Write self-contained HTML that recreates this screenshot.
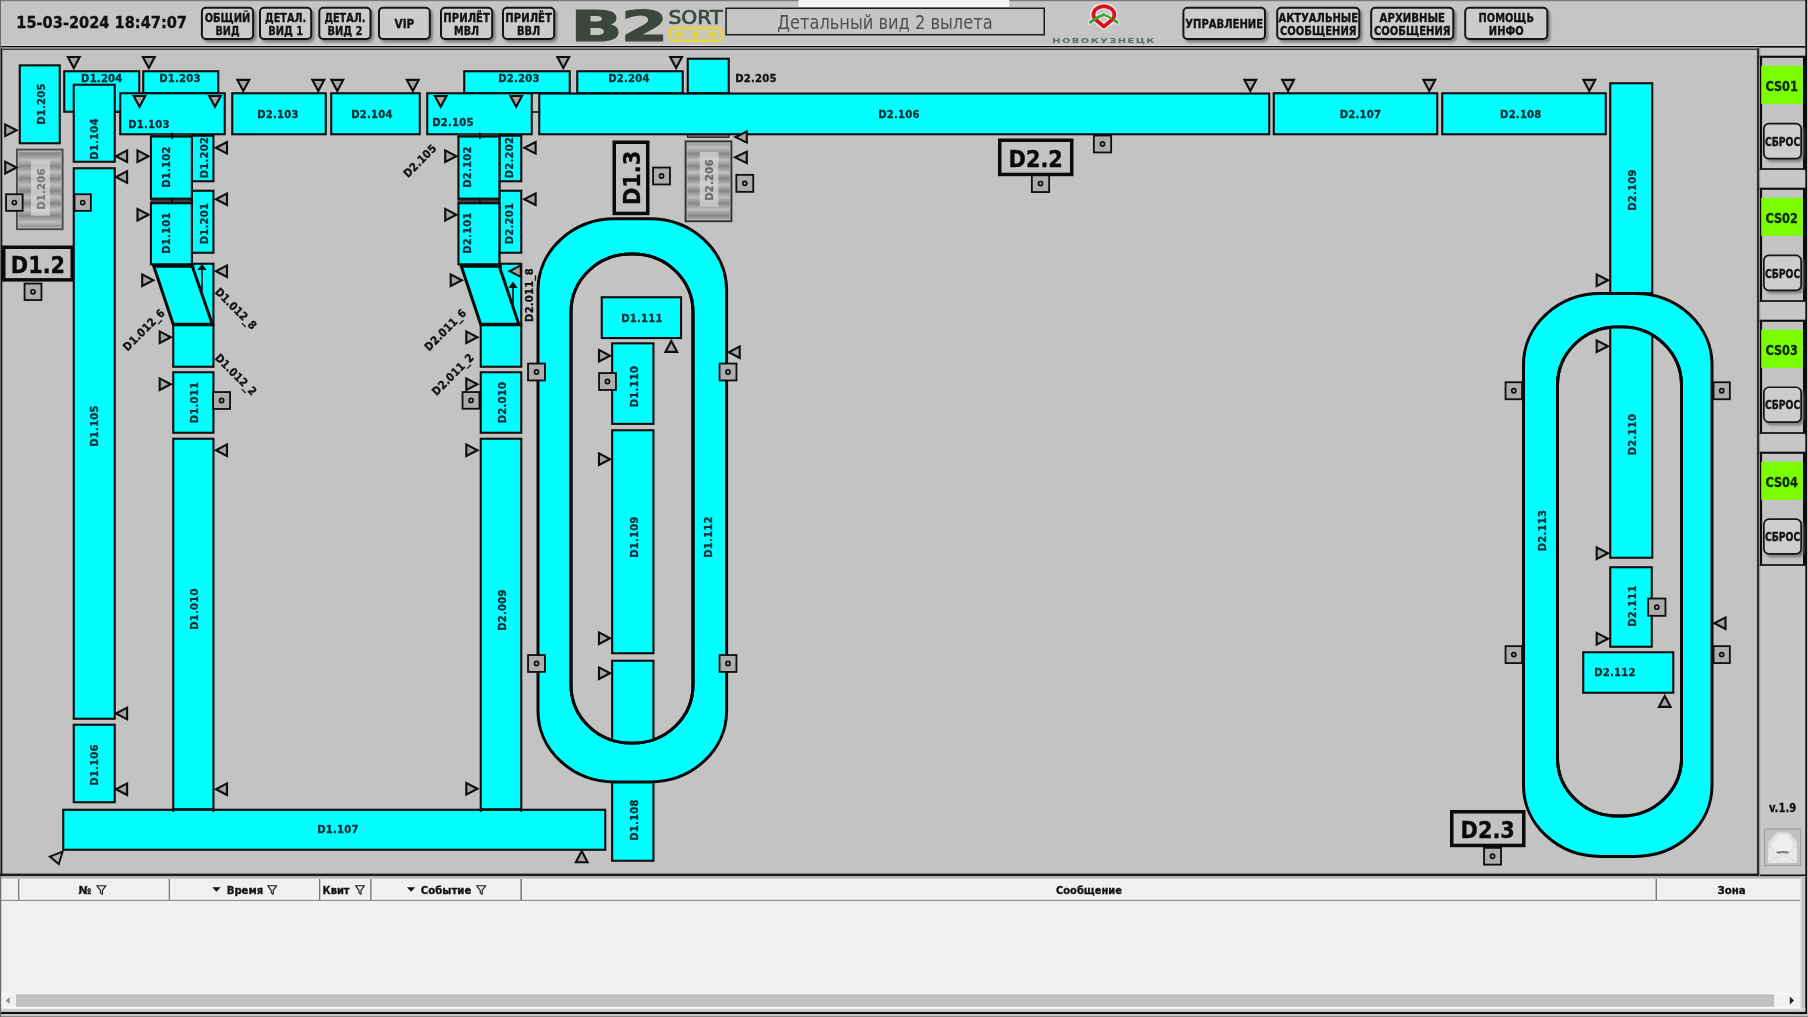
<!DOCTYPE html>
<html lang="ru"><head><meta charset="utf-8"><title>Детальный вид 2 вылета</title>
<style>
html,body{margin:0;padding:0;background:#c6c6c6;overflow:hidden}
body{width:1808px;height:1017px;position:relative;font-family:"DejaVu Sans Condensed","DejaVu Sans","Liberation Sans",sans-serif}
svg{position:absolute;left:0;top:0;display:block;will-change:transform;opacity:0.9999}
text{white-space:pre}
</style></head><body>
<svg width="1808" height="1017" viewBox="0 0 1808 1017">
<rect x="0" y="0" width="1808" height="1017" fill="#c5c5c5"/>
<rect x="0" y="0" width="1808" height="1.2" fill="#7a7a7a"/>
<rect x="798.6" y="0" width="210.6" height="7" fill="#f6f6f6"/>
<rect x="0" y="47" width="1759" height="829" fill="#c3c3c3"/>
<rect x="0" y="44.7" width="1805.3" height="1.2" fill="#d6d6d6"/>
<rect x="0" y="46" width="1805.3" height="1.6" fill="#050505"/>
<rect x="0" y="47.6" width="1759" height="1.0" fill="#e4e4e4"/>
<rect x="0" y="48.6" width="1759" height="1.1" fill="#080808"/>
<rect x="0" y="0" width="1" height="877" fill="#6a6a6a"/>
<rect x="1" y="48.5" width="1.3" height="827" fill="#101010"/>
<rect x="1756.9" y="48.5" width="2.1" height="828" fill="#2e2e2e"/>
<rect x="0" y="873.6" width="1759" height="2.8" fill="#1c1c1c"/>
<rect x="1759" y="48" width="49" height="829" fill="#c7c7c7"/>
<rect x="1759" y="47.4" width="46.3" height="0.6" fill="#555"/>
<rect x="1805.3" y="0" width="1.8" height="877" fill="#111"/>
<rect x="1759" y="874.5" width="49" height="2" fill="#111"/>
<rect x="1759" y="48" width="1.2" height="828" fill="#9a9a9a"/>
<rect x="19.75" y="65.35" width="40.00" height="77.90" fill="#00ffff" stroke="#0e0e0e" stroke-width="2.1" />
<rect x="64.25" y="71.25" width="75.00" height="40.50" fill="#00ffff" stroke="#0e0e0e" stroke-width="2.1" />
<rect x="73.75" y="84.75" width="41.00" height="77.00" fill="#00ffff" stroke="#0e0e0e" stroke-width="2.1" />
<rect x="120.25" y="93.25" width="104.50" height="41.00" fill="#00ffff" stroke="#0e0e0e" stroke-width="2.1" />
<rect x="143.25" y="71.25" width="75.00" height="21.80" fill="#00ffff" stroke="#0e0e0e" stroke-width="2.1" />
<rect x="232.25" y="93.25" width="93.50" height="41.00" fill="#00ffff" stroke="#0e0e0e" stroke-width="2.1" />
<rect x="331.25" y="93.25" width="88.50" height="41.00" fill="#00ffff" stroke="#0e0e0e" stroke-width="2.1" />
<rect x="73.75" y="168.25" width="41.00" height="550.50" fill="#00ffff" stroke="#0e0e0e" stroke-width="2.1" />
<rect x="73.75" y="724.75" width="41.00" height="77.50" fill="#00ffff" stroke="#0e0e0e" stroke-width="2.1" />
<rect x="150.5" y="133.4" width="42" height="4.2" fill="#3a3226"/>
<rect x="150.5" y="198.4" width="42" height="5.2" fill="#3a3a3a"/>
<rect x="191.95" y="135.75" width="21.50" height="45.50" fill="#00ffff" stroke="#0e0e0e" stroke-width="2.1" />
<rect x="191.95" y="190.75" width="21.50" height="62.00" fill="#00ffff" stroke="#0e0e0e" stroke-width="2.1" />
<rect x="150.95" y="136.55" width="40.90" height="62.10" fill="#00ffff" stroke="#0e0e0e" stroke-width="2.1" />
<rect x="150.95" y="203.25" width="40.90" height="61.00" fill="#00ffff" stroke="#0e0e0e" stroke-width="2.1" />
<rect x="171.4" y="132.6" width="1.7" height="6.6" fill="#111"/>
<rect x="171.4" y="197.6" width="1.7" height="6.6" fill="#111"/>
<rect x="191.2" y="181" width="1.7" height="10" fill="#111"/>
<rect x="191.2" y="252" width="1.7" height="12" fill="#111"/>
<rect x="193.25" y="263.75" width="20.20" height="61.00" fill="#00ffff" stroke="#0e0e0e" stroke-width="2.1" />
<rect x="173.25" y="325.25" width="40.20" height="41.50" fill="#00ffff" stroke="#0e0e0e" stroke-width="2.1" />
<polygon points="153.8,266.2 192.3,266.2 212.3,324.3 173.2,324.3" fill="#00ffff" stroke="#0c0c0c" stroke-width="3" stroke-linejoin="miter"/>
<path d="M202 291 V266.5" stroke="#111" stroke-width="1.6" fill="none"/><polygon points="202,263.8 197.3,270 206.7,270" fill="#111"/>
<rect x="173.25" y="372.25" width="40.20" height="60.50" fill="#00ffff" stroke="#0e0e0e" stroke-width="2.1" />
<rect x="173.25" y="438.75" width="40.20" height="370.50" fill="#00ffff" stroke="#0e0e0e" stroke-width="2.1" />
<rect x="63.25" y="809.75" width="542.00" height="40.00" fill="#00ffff" stroke="#0e0e0e" stroke-width="2.1" />
<rect x="172.5" y="808" width="1.6" height="4" fill="#111"/><rect x="212.6" y="808" width="1.6" height="4" fill="#111"/>
<rect x="427.25" y="93.25" width="104.50" height="41.00" fill="#00ffff" stroke="#0e0e0e" stroke-width="2.1" />
<rect x="464.25" y="71.25" width="105.50" height="21.80" fill="#00ffff" stroke="#0e0e0e" stroke-width="2.1" />
<rect x="539.25" y="93.55" width="730.00" height="40.70" fill="#00ffff" stroke="#0e0e0e" stroke-width="2.1" />
<rect x="577.25" y="71.25" width="105.50" height="21.80" fill="#00ffff" stroke="#0e0e0e" stroke-width="2.1" />
<rect x="687.75" y="58.75" width="41.00" height="34.30" fill="#00ffff" stroke="#0e0e0e" stroke-width="2.1" />
<rect x="532" y="111.2" width="7" height="1.6" fill="#111"/>
<rect x="115" y="111.2" width="5" height="1.6" fill="#111"/>
<rect x="1273.75" y="93.25" width="163.50" height="41.00" fill="#00ffff" stroke="#0e0e0e" stroke-width="2.1" />
<rect x="1442.25" y="93.25" width="163.50" height="41.00" fill="#00ffff" stroke="#0e0e0e" stroke-width="2.1" />
<rect x="1610.25" y="83.25" width="42.00" height="210.00" fill="#00ffff" stroke="#0e0e0e" stroke-width="2.1" />
<rect x="457.5" y="133.4" width="42" height="4.2" fill="#3a3226"/>
<rect x="457.5" y="198.4" width="42" height="5.2" fill="#3a3a3a"/>
<rect x="499.45" y="135.75" width="21.80" height="45.50" fill="#00ffff" stroke="#0e0e0e" stroke-width="2.1" />
<rect x="499.45" y="190.75" width="21.80" height="62.00" fill="#00ffff" stroke="#0e0e0e" stroke-width="2.1" />
<rect x="458.45" y="136.55" width="41.00" height="62.10" fill="#00ffff" stroke="#0e0e0e" stroke-width="2.1" />
<rect x="458.45" y="203.25" width="41.00" height="61.00" fill="#00ffff" stroke="#0e0e0e" stroke-width="2.1" />
<rect x="479" y="132.6" width="1.7" height="6.6" fill="#111"/>
<rect x="479" y="197.6" width="1.7" height="6.6" fill="#111"/>
<rect x="498.7" y="181" width="1.7" height="10" fill="#111"/>
<rect x="498.7" y="252" width="1.7" height="12" fill="#111"/>
<rect x="500.75" y="263.75" width="20.50" height="61.00" fill="#00ffff" stroke="#0e0e0e" stroke-width="2.1" />
<rect x="480.75" y="325.25" width="40.50" height="41.50" fill="#00ffff" stroke="#0e0e0e" stroke-width="2.1" />
<polygon points="461.3,266.2 499.3,266.2 518.8,324.3 480.7,324.3" fill="#00ffff" stroke="#0c0c0c" stroke-width="3" stroke-linejoin="miter"/>
<path d="M513 305 V284" stroke="#111" stroke-width="1.6" fill="none"/><polygon points="513,281.5 508.3,288 517.7,288" fill="#111"/>
<rect x="480.75" y="372.25" width="40.50" height="60.50" fill="#00ffff" stroke="#0e0e0e" stroke-width="2.1" />
<rect x="480.75" y="438.75" width="40.50" height="370.50" fill="#00ffff" stroke="#0e0e0e" stroke-width="2.1" />
<rect x="62.5" y="809" width="543.5" height="1.6" fill="#141414"/>
<rect x="480" y="808" width="1.6" height="4" fill="#111"/><rect x="520.4" y="808" width="1.6" height="4" fill="#111"/>
<rect x="687.60" y="134.80" width="41.30" height="2.40" fill="#8c8c8c" stroke="#0e0e0e" stroke-width="1.2" />
<defs><linearGradient id="stripe" gradientUnits="userSpaceOnUse" x1="0" y1="153.8" x2="0" y2="160" spreadMethod="reflect"><stop offset="0" stop-color="#868686"/><stop offset="1" stop-color="#bebebe"/></linearGradient></defs>
<rect x="16.95" y="149.55" width="45.7" height="79.69999999999999" fill="#b4b4b4" stroke="#484848" stroke-width="1.8"/>
<rect x="18.8" y="151.8" width="42.0" height="75.19999999999999" fill="url(#stripe)"/>
<rect x="31" y="160.6" width="19" height="55.099999999999994" fill="#d8dad8" fill-opacity="0.72"/>
<rect x="685.55" y="141.35" width="45.90000000000009" height="79.9" fill="#b4b4b4" stroke="#2e2e2e" stroke-width="1.8"/>
<rect x="687.4" y="143.6" width="42.20000000000009" height="75.4" fill="url(#stripe)"/>
<rect x="699.8" y="151.8" width="18.600000000000023" height="54.79999999999998" fill="#d8dad8" fill-opacity="0.72"/>
<rect x="612.15" y="781.75" width="41.30" height="79.00" fill="#00ffff" stroke="#0e0e0e" stroke-width="2.1" />
<rect x="538" y="218.8" width="188.60" height="563.20" rx="77" ry="71" fill="#00ffff" stroke="#080808" stroke-width="3"/>
<rect x="571" y="254" width="122.00" height="489.00" rx="59.5" ry="58" fill="#c3c3c3" stroke="#080808" stroke-width="3"/>
<rect x="601.75" y="297.25" width="79.30" height="40.80" fill="#00ffff" stroke="#0e0e0e" stroke-width="2.1" />
<rect x="612.15" y="343.35" width="41.30" height="80.50" fill="#00ffff" stroke="#0e0e0e" stroke-width="2.1" />
<rect x="612.15" y="430.25" width="41.30" height="223.00" fill="#00ffff" stroke="#0e0e0e" stroke-width="2.1" />
<clipPath id="cl1"><rect x="571" y="254" width="122" height="489" rx="59.5" ry="58"/></clipPath>
<rect x="612.15" y="660.75" width="41.30" height="88.50" fill="#00ffff" stroke="#0e0e0e" stroke-width="2.1" clip-path="url(#cl1)"/>
<rect x="571" y="254" width="122.00" height="489.00" rx="59.5" ry="58" fill="none" stroke="#080808" stroke-width="3"/>
<rect x="1523.5" y="293.5" width="188.50" height="563.00" rx="77" ry="71" fill="#00ffff" stroke="#080808" stroke-width="3"/>
<rect x="1557.5" y="327" width="124.00" height="489.00" rx="59.5" ry="58" fill="#c3c3c3" stroke="#080808" stroke-width="3"/>
<clipPath id="cl2"><rect x="1557.5" y="327" width="124" height="489" rx="59.5" ry="58"/></clipPath>
<rect x="1610.25" y="322.75" width="42.00" height="235.00" fill="#00ffff" stroke="#0e0e0e" stroke-width="2.1" clip-path="url(#cl2)"/>
<rect x="1610.25" y="567.25" width="41.50" height="79.50" fill="#00ffff" stroke="#0e0e0e" stroke-width="2.1" />
<rect x="1583.25" y="652.25" width="90.00" height="40.50" fill="#00ffff" stroke="#0e0e0e" stroke-width="2.1" />
<rect x="1557.5" y="327" width="124.00" height="489.00" rx="59.5" ry="58" fill="none" stroke="#080808" stroke-width="3"/>
<polygon points="67.90,57.00 79.70,57.00 73.80,68.11" fill="#a4a4a4" stroke="#0e0e0e" stroke-width="2.1" stroke-linejoin="miter"/>
<polygon points="142.90,57.00 154.70,57.00 148.80,68.11" fill="#a4a4a4" stroke="#0e0e0e" stroke-width="2.1" stroke-linejoin="miter"/>
<polygon points="557.40,57.00 569.20,57.00 563.30,68.11" fill="#a4a4a4" stroke="#0e0e0e" stroke-width="2.1" stroke-linejoin="miter"/>
<polygon points="670.20,57.00 682.00,57.00 676.10,68.11" fill="#a4a4a4" stroke="#0e0e0e" stroke-width="2.1" stroke-linejoin="miter"/>
<polygon points="237.39,79.90 249.21,79.90 243.30,91.10" fill="#a4a4a4" stroke="#0e0e0e" stroke-width="2.1" stroke-linejoin="miter"/>
<polygon points="312.39,79.90 324.21,79.90 318.30,91.10" fill="#a4a4a4" stroke="#0e0e0e" stroke-width="2.1" stroke-linejoin="miter"/>
<polygon points="331.39,79.90 343.21,79.90 337.30,91.10" fill="#a4a4a4" stroke="#0e0e0e" stroke-width="2.1" stroke-linejoin="miter"/>
<polygon points="406.89,79.90 418.71,79.90 412.80,91.10" fill="#a4a4a4" stroke="#0e0e0e" stroke-width="2.1" stroke-linejoin="miter"/>
<polygon points="1244.39,79.90 1256.21,79.90 1250.30,91.10" fill="#a4a4a4" stroke="#0e0e0e" stroke-width="2.1" stroke-linejoin="miter"/>
<polygon points="1282.19,79.90 1294.01,79.90 1288.10,91.10" fill="#a4a4a4" stroke="#0e0e0e" stroke-width="2.1" stroke-linejoin="miter"/>
<polygon points="1423.39,79.90 1435.21,79.90 1429.30,91.10" fill="#a4a4a4" stroke="#0e0e0e" stroke-width="2.1" stroke-linejoin="miter"/>
<polygon points="1583.39,79.90 1595.21,79.90 1589.30,91.10" fill="#a4a4a4" stroke="#0e0e0e" stroke-width="2.1" stroke-linejoin="miter"/>
<polygon points="133.71,96.00 145.29,96.00 139.50,106.74" fill="#a4a4a4" stroke="#0e0e0e" stroke-width="2.1" stroke-linejoin="miter"/>
<polygon points="209.21,96.00 220.79,96.00 215.00,106.74" fill="#a4a4a4" stroke="#0e0e0e" stroke-width="2.1" stroke-linejoin="miter"/>
<polygon points="434.91,96.00 446.49,96.00 440.70,106.74" fill="#a4a4a4" stroke="#0e0e0e" stroke-width="2.1" stroke-linejoin="miter"/>
<polygon points="510.41,96.00 521.99,96.00 516.20,106.74" fill="#a4a4a4" stroke="#0e0e0e" stroke-width="2.1" stroke-linejoin="miter"/>
<polygon points="5.20,124.37 5.20,136.13 16.56,130.25" fill="#a4a4a4" stroke="#0e0e0e" stroke-width="2.1" stroke-linejoin="miter"/>
<polygon points="5.20,161.67 5.20,173.43 16.56,167.55" fill="#a4a4a4" stroke="#0e0e0e" stroke-width="2.1" stroke-linejoin="miter"/>
<polygon points="127.10,150.38 127.10,162.02 115.92,156.20" fill="#a4a4a4" stroke="#0e0e0e" stroke-width="2.1" stroke-linejoin="miter"/>
<polygon points="127.10,171.18 127.10,182.82 115.92,177.00" fill="#a4a4a4" stroke="#0e0e0e" stroke-width="2.1" stroke-linejoin="miter"/>
<polygon points="137.50,150.38 137.50,162.02 148.68,156.20" fill="#a4a4a4" stroke="#0e0e0e" stroke-width="2.1" stroke-linejoin="miter"/>
<polygon points="137.50,208.88 137.50,220.52 148.68,214.70" fill="#a4a4a4" stroke="#0e0e0e" stroke-width="2.1" stroke-linejoin="miter"/>
<polygon points="227.00,141.99 227.00,153.61 215.91,147.80" fill="#a4a4a4" stroke="#0e0e0e" stroke-width="2.1" stroke-linejoin="miter"/>
<polygon points="227.00,193.39 227.00,205.01 215.91,199.20" fill="#a4a4a4" stroke="#0e0e0e" stroke-width="2.1" stroke-linejoin="miter"/>
<polygon points="227.00,265.39 227.00,277.01 215.91,271.20" fill="#a4a4a4" stroke="#0e0e0e" stroke-width="2.1" stroke-linejoin="miter"/>
<polygon points="142.20,274.38 142.20,286.02 153.38,280.20" fill="#a4a4a4" stroke="#0e0e0e" stroke-width="2.1" stroke-linejoin="miter"/>
<polygon points="159.70,331.39 159.70,343.01 170.79,337.20" fill="#a4a4a4" stroke="#0e0e0e" stroke-width="2.1" stroke-linejoin="miter"/>
<polygon points="159.70,378.39 159.70,390.01 170.79,384.20" fill="#a4a4a4" stroke="#0e0e0e" stroke-width="2.1" stroke-linejoin="miter"/>
<polygon points="227.00,444.39 227.00,456.01 215.91,450.20" fill="#a4a4a4" stroke="#0e0e0e" stroke-width="2.1" stroke-linejoin="miter"/>
<polygon points="127.10,707.68 127.10,719.32 115.92,713.50" fill="#a4a4a4" stroke="#0e0e0e" stroke-width="2.1" stroke-linejoin="miter"/>
<polygon points="127.10,783.38 127.10,795.02 115.92,789.20" fill="#a4a4a4" stroke="#0e0e0e" stroke-width="2.1" stroke-linejoin="miter"/>
<polygon points="227.00,783.39 227.00,795.01 215.91,789.20" fill="#a4a4a4" stroke="#0e0e0e" stroke-width="2.1" stroke-linejoin="miter"/>
<polygon points="445.20,150.38 445.20,162.02 456.38,156.20" fill="#a4a4a4" stroke="#0e0e0e" stroke-width="2.1" stroke-linejoin="miter"/>
<polygon points="445.20,208.88 445.20,220.52 456.38,214.70" fill="#a4a4a4" stroke="#0e0e0e" stroke-width="2.1" stroke-linejoin="miter"/>
<polygon points="535.60,141.97 535.60,153.63 524.25,147.80" fill="#a4a4a4" stroke="#0e0e0e" stroke-width="2.1" stroke-linejoin="miter"/>
<polygon points="535.60,193.37 535.60,205.03 524.25,199.20" fill="#a4a4a4" stroke="#0e0e0e" stroke-width="2.1" stroke-linejoin="miter"/>
<polygon points="520.80,265.38 520.80,276.82 509.74,271.10" fill="#a4a4a4" stroke="#0e0e0e" stroke-width="2.1" stroke-linejoin="miter"/>
<polygon points="450.70,274.38 450.70,286.02 461.88,280.20" fill="#a4a4a4" stroke="#0e0e0e" stroke-width="2.1" stroke-linejoin="miter"/>
<polygon points="466.30,331.38 466.30,343.02 477.48,337.20" fill="#a4a4a4" stroke="#0e0e0e" stroke-width="2.1" stroke-linejoin="miter"/>
<polygon points="466.30,378.38 466.30,390.02 477.48,384.20" fill="#a4a4a4" stroke="#0e0e0e" stroke-width="2.1" stroke-linejoin="miter"/>
<polygon points="466.30,444.38 466.30,456.02 477.48,450.20" fill="#a4a4a4" stroke="#0e0e0e" stroke-width="2.1" stroke-linejoin="miter"/>
<polygon points="466.30,782.98 466.30,794.62 477.48,788.80" fill="#a4a4a4" stroke="#0e0e0e" stroke-width="2.1" stroke-linejoin="miter"/>
<polygon points="746.80,131.54 746.80,142.66 735.52,137.10" fill="#a4a4a4" stroke="#0e0e0e" stroke-width="2.1" stroke-linejoin="miter"/>
<polygon points="746.80,151.63 746.80,163.07 735.05,157.35" fill="#a4a4a4" stroke="#0e0e0e" stroke-width="2.1" stroke-linejoin="miter"/>
<polygon points="599.00,349.89 599.00,361.51 610.09,355.70" fill="#a4a4a4" stroke="#0e0e0e" stroke-width="2.1" stroke-linejoin="miter"/>
<polygon points="599.00,453.39 599.00,465.01 610.09,459.20" fill="#a4a4a4" stroke="#0e0e0e" stroke-width="2.1" stroke-linejoin="miter"/>
<polygon points="599.00,632.39 599.00,644.01 610.09,638.20" fill="#a4a4a4" stroke="#0e0e0e" stroke-width="2.1" stroke-linejoin="miter"/>
<polygon points="599.00,667.39 599.00,679.01 610.09,673.20" fill="#a4a4a4" stroke="#0e0e0e" stroke-width="2.1" stroke-linejoin="miter"/>
<polygon points="665.40,351.90 677.20,351.90 671.30,340.88" fill="#a4a4a4" stroke="#0e0e0e" stroke-width="2.1" stroke-linejoin="miter"/>
<polygon points="739.70,346.40 739.70,358.00 728.87,352.20" fill="#a4a4a4" stroke="#0e0e0e" stroke-width="2.1" stroke-linejoin="miter"/>
<polygon points="575.89,862.30 587.61,862.30 581.75,851.11" fill="#a4a4a4" stroke="#0e0e0e" stroke-width="2.1" stroke-linejoin="miter"/>
<polygon points="1596.70,274.37 1596.70,286.03 1608.05,280.20" fill="#a4a4a4" stroke="#0e0e0e" stroke-width="2.1" stroke-linejoin="miter"/>
<polygon points="1596.70,340.37 1596.70,352.03 1608.05,346.20" fill="#a4a4a4" stroke="#0e0e0e" stroke-width="2.1" stroke-linejoin="miter"/>
<polygon points="1596.70,547.37 1596.70,559.03 1608.05,553.20" fill="#a4a4a4" stroke="#0e0e0e" stroke-width="2.1" stroke-linejoin="miter"/>
<polygon points="1596.70,632.87 1596.70,644.53 1608.05,638.70" fill="#a4a4a4" stroke="#0e0e0e" stroke-width="2.1" stroke-linejoin="miter"/>
<polygon points="1725.50,617.39 1725.50,629.01 1714.41,623.20" fill="#a4a4a4" stroke="#0e0e0e" stroke-width="2.1" stroke-linejoin="miter"/>
<polygon points="1658.90,706.90 1670.60,706.90 1664.75,695.89" fill="#a4a4a4" stroke="#0e0e0e" stroke-width="2.1" stroke-linejoin="miter"/>
<polygon points="49.8,856.6 62.6,851.6 58.8,864" fill="#b0b0b0" stroke="#0e0e0e" stroke-width="1.9" stroke-linejoin="miter"/>
<rect x="6.05" y="194.25" width="16.60" height="16.60" fill="#adadad" stroke="#0e0e0e" stroke-width="1.8" />
<circle cx="14.35" cy="202.55" r="2.05" fill="#adadad" stroke="#0e0e0e" stroke-width="1.7"/>
<rect x="74.55" y="194.25" width="16.30" height="16.60" fill="#adadad" stroke="#0e0e0e" stroke-width="1.8" />
<circle cx="82.70" cy="202.55" r="2.05" fill="#adadad" stroke="#0e0e0e" stroke-width="1.7"/>
<rect x="24.55" y="283.55" width="16.90" height="16.50" fill="#adadad" stroke="#0e0e0e" stroke-width="1.8" />
<circle cx="33.00" cy="291.80" r="2.05" fill="#adadad" stroke="#0e0e0e" stroke-width="1.7"/>
<rect x="213.15" y="392.05" width="16.90" height="16.90" fill="#adadad" stroke="#0e0e0e" stroke-width="1.8" />
<circle cx="221.60" cy="400.50" r="2.05" fill="#adadad" stroke="#0e0e0e" stroke-width="1.7"/>
<rect x="462.55" y="392.05" width="16.90" height="16.70" fill="#adadad" stroke="#0e0e0e" stroke-width="1.8" />
<circle cx="471.00" cy="400.40" r="2.05" fill="#adadad" stroke="#0e0e0e" stroke-width="1.7"/>
<rect x="528.05" y="363.55" width="16.90" height="16.90" fill="#adadad" stroke="#0e0e0e" stroke-width="1.8" />
<circle cx="536.50" cy="372.00" r="2.05" fill="#adadad" stroke="#0e0e0e" stroke-width="1.7"/>
<rect x="599.05" y="373.05" width="16.90" height="16.90" fill="#adadad" stroke="#0e0e0e" stroke-width="1.8" />
<circle cx="607.50" cy="381.50" r="2.05" fill="#adadad" stroke="#0e0e0e" stroke-width="1.7"/>
<rect x="719.55" y="363.55" width="16.90" height="16.90" fill="#adadad" stroke="#0e0e0e" stroke-width="1.8" />
<circle cx="728.00" cy="372.00" r="2.05" fill="#adadad" stroke="#0e0e0e" stroke-width="1.7"/>
<rect x="528.05" y="655.05" width="16.90" height="16.90" fill="#adadad" stroke="#0e0e0e" stroke-width="1.8" />
<circle cx="536.50" cy="663.50" r="2.05" fill="#adadad" stroke="#0e0e0e" stroke-width="1.7"/>
<rect x="719.55" y="655.05" width="16.90" height="16.90" fill="#adadad" stroke="#0e0e0e" stroke-width="1.8" />
<circle cx="728.00" cy="663.50" r="2.05" fill="#adadad" stroke="#0e0e0e" stroke-width="1.7"/>
<rect x="653.05" y="167.55" width="16.90" height="16.90" fill="#adadad" stroke="#0e0e0e" stroke-width="1.8" />
<circle cx="661.50" cy="176.00" r="2.05" fill="#adadad" stroke="#0e0e0e" stroke-width="1.7"/>
<rect x="736.35" y="174.85" width="16.90" height="17.00" fill="#adadad" stroke="#0e0e0e" stroke-width="1.8" />
<circle cx="744.80" cy="183.35" r="2.05" fill="#adadad" stroke="#0e0e0e" stroke-width="1.7"/>
<rect x="1031.85" y="175.05" width="17.30" height="17.00" fill="#adadad" stroke="#0e0e0e" stroke-width="1.8" />
<circle cx="1040.50" cy="183.55" r="2.05" fill="#adadad" stroke="#0e0e0e" stroke-width="1.7"/>
<rect x="1093.85" y="135.55" width="17.30" height="16.90" fill="#adadad" stroke="#0e0e0e" stroke-width="1.8" />
<circle cx="1102.50" cy="144.00" r="2.05" fill="#adadad" stroke="#0e0e0e" stroke-width="1.7"/>
<rect x="1505.55" y="382.25" width="16.50" height="17.00" fill="#adadad" stroke="#0e0e0e" stroke-width="1.8" />
<circle cx="1513.80" cy="390.75" r="2.05" fill="#adadad" stroke="#0e0e0e" stroke-width="1.7"/>
<rect x="1713.55" y="382.25" width="16.30" height="17.00" fill="#adadad" stroke="#0e0e0e" stroke-width="1.8" />
<circle cx="1721.70" cy="390.75" r="2.05" fill="#adadad" stroke="#0e0e0e" stroke-width="1.7"/>
<rect x="1648.15" y="598.55" width="17.30" height="17.30" fill="#adadad" stroke="#0e0e0e" stroke-width="1.8" />
<circle cx="1656.80" cy="607.20" r="2.05" fill="#adadad" stroke="#0e0e0e" stroke-width="1.7"/>
<rect x="1505.55" y="646.15" width="16.50" height="16.90" fill="#adadad" stroke="#0e0e0e" stroke-width="1.8" />
<circle cx="1513.80" cy="654.60" r="2.05" fill="#adadad" stroke="#0e0e0e" stroke-width="1.7"/>
<rect x="1713.55" y="646.15" width="16.30" height="16.90" fill="#adadad" stroke="#0e0e0e" stroke-width="1.8" />
<circle cx="1721.70" cy="654.60" r="2.05" fill="#adadad" stroke="#0e0e0e" stroke-width="1.7"/>
<rect x="1484.05" y="847.85" width="17.00" height="16.80" fill="#adadad" stroke="#0e0e0e" stroke-width="1.8" />
<circle cx="1492.55" cy="856.25" r="2.05" fill="#adadad" stroke="#0e0e0e" stroke-width="1.7"/>
<rect x="3.75" y="247.25" width="68.50" height="32.60" fill="#c3c3c3" stroke="#0a0a0a" stroke-width="3.5" />
<text x="38.00" y="272.89" font-family="DejaVu Sans Condensed, DejaVu Sans, Liberation Sans, sans-serif" font-weight="bold" font-size="22.6" fill="#0a0a0a" stroke="#0a0a0a" stroke-width="0.3" text-anchor="middle" textLength="54.3" lengthAdjust="spacingAndGlyphs">D1.2</text>
<rect x="614.25" y="142.25" width="33.50" height="71.20" fill="#c3c3c3" stroke="#0a0a0a" stroke-width="3.5" />
<text x="631.90" y="186.09" font-family="DejaVu Sans Condensed, DejaVu Sans, Liberation Sans, sans-serif" font-weight="bold" font-size="22.6" fill="#0a0a0a" stroke="#0a0a0a" stroke-width="0.3" text-anchor="middle" textLength="54.3" lengthAdjust="spacingAndGlyphs" transform="rotate(-90 631.90 177.85)">D1.3</text>
<rect x="999.75" y="140.25" width="72.00" height="34.20" fill="#c3c3c3" stroke="#0a0a0a" stroke-width="3.5" />
<text x="1035.75" y="166.69" font-family="DejaVu Sans Condensed, DejaVu Sans, Liberation Sans, sans-serif" font-weight="bold" font-size="22.6" fill="#0a0a0a" stroke="#0a0a0a" stroke-width="0.3" text-anchor="middle" textLength="54.3" lengthAdjust="spacingAndGlyphs">D2.2</text>
<rect x="1451.75" y="811.75" width="72.00" height="33.70" fill="#c3c3c3" stroke="#0a0a0a" stroke-width="3.5" />
<text x="1487.75" y="837.94" font-family="DejaVu Sans Condensed, DejaVu Sans, Liberation Sans, sans-serif" font-weight="bold" font-size="22.6" fill="#0a0a0a" stroke="#0a0a0a" stroke-width="0.3" text-anchor="middle" textLength="54.3" lengthAdjust="spacingAndGlyphs">D2.3</text>
<text x="101.80" y="81.73" font-family="DejaVu Sans Condensed, DejaVu Sans, Liberation Sans, sans-serif" font-weight="bold" font-size="11.2" fill="#0d2b33" stroke="#0d2b33" stroke-width="0.3" text-anchor="middle" letter-spacing="0.2">D1.204</text>
<text x="180.00" y="81.73" font-family="DejaVu Sans Condensed, DejaVu Sans, Liberation Sans, sans-serif" font-weight="bold" font-size="11.2" fill="#0d2b33" stroke="#0d2b33" stroke-width="0.3" text-anchor="middle" letter-spacing="0.2">D1.203</text>
<text x="149.00" y="127.73" font-family="DejaVu Sans Condensed, DejaVu Sans, Liberation Sans, sans-serif" font-weight="bold" font-size="11.2" fill="#0d2b33" stroke="#0d2b33" stroke-width="0.3" text-anchor="middle" letter-spacing="0.2">D1.103</text>
<text x="278.00" y="118.23" font-family="DejaVu Sans Condensed, DejaVu Sans, Liberation Sans, sans-serif" font-weight="bold" font-size="11.2" fill="#0d2b33" stroke="#0d2b33" stroke-width="0.3" text-anchor="middle" letter-spacing="0.2">D2.103</text>
<text x="372.00" y="118.23" font-family="DejaVu Sans Condensed, DejaVu Sans, Liberation Sans, sans-serif" font-weight="bold" font-size="11.2" fill="#0d2b33" stroke="#0d2b33" stroke-width="0.3" text-anchor="middle" letter-spacing="0.2">D2.104</text>
<text x="453.00" y="125.73" font-family="DejaVu Sans Condensed, DejaVu Sans, Liberation Sans, sans-serif" font-weight="bold" font-size="11.2" fill="#0d2b33" stroke="#0d2b33" stroke-width="0.3" text-anchor="middle" letter-spacing="0.2">D2.105</text>
<text x="519.00" y="81.73" font-family="DejaVu Sans Condensed, DejaVu Sans, Liberation Sans, sans-serif" font-weight="bold" font-size="11.2" fill="#0d2b33" stroke="#0d2b33" stroke-width="0.3" text-anchor="middle" letter-spacing="0.2">D2.203</text>
<text x="629.00" y="81.73" font-family="DejaVu Sans Condensed, DejaVu Sans, Liberation Sans, sans-serif" font-weight="bold" font-size="11.2" fill="#0d2b33" stroke="#0d2b33" stroke-width="0.3" text-anchor="middle" letter-spacing="0.2">D2.204</text>
<text x="899.00" y="118.23" font-family="DejaVu Sans Condensed, DejaVu Sans, Liberation Sans, sans-serif" font-weight="bold" font-size="11.2" fill="#0d2b33" stroke="#0d2b33" stroke-width="0.3" text-anchor="middle" letter-spacing="0.2">D2.106</text>
<text x="1360.50" y="118.23" font-family="DejaVu Sans Condensed, DejaVu Sans, Liberation Sans, sans-serif" font-weight="bold" font-size="11.2" fill="#0d2b33" stroke="#0d2b33" stroke-width="0.3" text-anchor="middle" letter-spacing="0.2">D2.107</text>
<text x="1520.80" y="118.23" font-family="DejaVu Sans Condensed, DejaVu Sans, Liberation Sans, sans-serif" font-weight="bold" font-size="11.2" fill="#0d2b33" stroke="#0d2b33" stroke-width="0.3" text-anchor="middle" letter-spacing="0.2">D2.108</text>
<text x="642.00" y="321.73" font-family="DejaVu Sans Condensed, DejaVu Sans, Liberation Sans, sans-serif" font-weight="bold" font-size="11.2" fill="#0d2b33" stroke="#0d2b33" stroke-width="0.3" text-anchor="middle" letter-spacing="0.2">D1.111</text>
<text x="1615.00" y="675.73" font-family="DejaVu Sans Condensed, DejaVu Sans, Liberation Sans, sans-serif" font-weight="bold" font-size="11.2" fill="#0d2b33" stroke="#0d2b33" stroke-width="0.3" text-anchor="middle" letter-spacing="0.2">D2.112</text>
<text x="338.00" y="833.23" font-family="DejaVu Sans Condensed, DejaVu Sans, Liberation Sans, sans-serif" font-weight="bold" font-size="11.2" fill="#0d2b33" stroke="#0d2b33" stroke-width="0.3" text-anchor="middle" letter-spacing="0.2">D1.107</text>
<text x="756.00" y="81.73" font-family="DejaVu Sans Condensed, DejaVu Sans, Liberation Sans, sans-serif" font-weight="bold" font-size="11.2" fill="#111" stroke="#111" stroke-width="0.3" text-anchor="middle" letter-spacing="0.2">D2.205</text>
<text x="41.00" y="107.73" font-family="DejaVu Sans Condensed, DejaVu Sans, Liberation Sans, sans-serif" font-weight="bold" font-size="11.2" fill="#0d2b33" stroke="#0d2b33" stroke-width="0.3" text-anchor="middle" letter-spacing="0.2" transform="rotate(-90 41.00 104.00)">D1.205</text>
<text x="94.50" y="142.73" font-family="DejaVu Sans Condensed, DejaVu Sans, Liberation Sans, sans-serif" font-weight="bold" font-size="11.2" fill="#0d2b33" stroke="#0d2b33" stroke-width="0.3" text-anchor="middle" letter-spacing="0.2" transform="rotate(-90 94.50 139.00)">D1.104</text>
<text x="166.00" y="170.73" font-family="DejaVu Sans Condensed, DejaVu Sans, Liberation Sans, sans-serif" font-weight="bold" font-size="11.2" fill="#0d2b33" stroke="#0d2b33" stroke-width="0.3" text-anchor="middle" letter-spacing="0.2" transform="rotate(-90 166.00 167.00)">D1.102</text>
<text x="204.50" y="161.23" font-family="DejaVu Sans Condensed, DejaVu Sans, Liberation Sans, sans-serif" font-weight="bold" font-size="11.2" fill="#0d2b33" stroke="#0d2b33" stroke-width="0.3" text-anchor="middle" letter-spacing="0.2" transform="rotate(-90 204.50 157.50)">D1.202</text>
<text x="166.00" y="236.73" font-family="DejaVu Sans Condensed, DejaVu Sans, Liberation Sans, sans-serif" font-weight="bold" font-size="11.2" fill="#0d2b33" stroke="#0d2b33" stroke-width="0.3" text-anchor="middle" letter-spacing="0.2" transform="rotate(-90 166.00 233.00)">D1.101</text>
<text x="204.50" y="227.23" font-family="DejaVu Sans Condensed, DejaVu Sans, Liberation Sans, sans-serif" font-weight="bold" font-size="11.2" fill="#0d2b33" stroke="#0d2b33" stroke-width="0.3" text-anchor="middle" letter-spacing="0.2" transform="rotate(-90 204.50 223.50)">D1.201</text>
<text x="94.50" y="429.73" font-family="DejaVu Sans Condensed, DejaVu Sans, Liberation Sans, sans-serif" font-weight="bold" font-size="11.2" fill="#0d2b33" stroke="#0d2b33" stroke-width="0.3" text-anchor="middle" letter-spacing="0.2" transform="rotate(-90 94.50 426.00)">D1.105</text>
<text x="194.50" y="406.23" font-family="DejaVu Sans Condensed, DejaVu Sans, Liberation Sans, sans-serif" font-weight="bold" font-size="11.2" fill="#0d2b33" stroke="#0d2b33" stroke-width="0.3" text-anchor="middle" letter-spacing="0.2" transform="rotate(-90 194.50 402.50)">D1.011</text>
<text x="194.50" y="612.73" font-family="DejaVu Sans Condensed, DejaVu Sans, Liberation Sans, sans-serif" font-weight="bold" font-size="11.2" fill="#0d2b33" stroke="#0d2b33" stroke-width="0.3" text-anchor="middle" letter-spacing="0.2" transform="rotate(-90 194.50 609.00)">D1.010</text>
<text x="94.50" y="768.73" font-family="DejaVu Sans Condensed, DejaVu Sans, Liberation Sans, sans-serif" font-weight="bold" font-size="11.2" fill="#0d2b33" stroke="#0d2b33" stroke-width="0.3" text-anchor="middle" letter-spacing="0.2" transform="rotate(-90 94.50 765.00)">D1.106</text>
<text x="467.00" y="170.73" font-family="DejaVu Sans Condensed, DejaVu Sans, Liberation Sans, sans-serif" font-weight="bold" font-size="11.2" fill="#0d2b33" stroke="#0d2b33" stroke-width="0.3" text-anchor="middle" letter-spacing="0.2" transform="rotate(-90 467.00 167.00)">D2.102</text>
<text x="509.50" y="161.23" font-family="DejaVu Sans Condensed, DejaVu Sans, Liberation Sans, sans-serif" font-weight="bold" font-size="11.2" fill="#0d2b33" stroke="#0d2b33" stroke-width="0.3" text-anchor="middle" letter-spacing="0.2" transform="rotate(-90 509.50 157.50)">D2.202</text>
<text x="467.00" y="236.73" font-family="DejaVu Sans Condensed, DejaVu Sans, Liberation Sans, sans-serif" font-weight="bold" font-size="11.2" fill="#0d2b33" stroke="#0d2b33" stroke-width="0.3" text-anchor="middle" letter-spacing="0.2" transform="rotate(-90 467.00 233.00)">D2.101</text>
<text x="509.50" y="227.23" font-family="DejaVu Sans Condensed, DejaVu Sans, Liberation Sans, sans-serif" font-weight="bold" font-size="11.2" fill="#0d2b33" stroke="#0d2b33" stroke-width="0.3" text-anchor="middle" letter-spacing="0.2" transform="rotate(-90 509.50 223.50)">D2.201</text>
<text x="502.00" y="406.23" font-family="DejaVu Sans Condensed, DejaVu Sans, Liberation Sans, sans-serif" font-weight="bold" font-size="11.2" fill="#0d2b33" stroke="#0d2b33" stroke-width="0.3" text-anchor="middle" letter-spacing="0.2" transform="rotate(-90 502.00 402.50)">D2.010</text>
<text x="502.00" y="613.73" font-family="DejaVu Sans Condensed, DejaVu Sans, Liberation Sans, sans-serif" font-weight="bold" font-size="11.2" fill="#0d2b33" stroke="#0d2b33" stroke-width="0.3" text-anchor="middle" letter-spacing="0.2" transform="rotate(-90 502.00 610.00)">D2.009</text>
<text x="634.00" y="390.23" font-family="DejaVu Sans Condensed, DejaVu Sans, Liberation Sans, sans-serif" font-weight="bold" font-size="11.2" fill="#0d2b33" stroke="#0d2b33" stroke-width="0.3" text-anchor="middle" letter-spacing="0.2" transform="rotate(-90 634.00 386.50)">D1.110</text>
<text x="634.00" y="540.73" font-family="DejaVu Sans Condensed, DejaVu Sans, Liberation Sans, sans-serif" font-weight="bold" font-size="11.2" fill="#0d2b33" stroke="#0d2b33" stroke-width="0.3" text-anchor="middle" letter-spacing="0.2" transform="rotate(-90 634.00 537.00)">D1.109</text>
<text x="708.50" y="540.73" font-family="DejaVu Sans Condensed, DejaVu Sans, Liberation Sans, sans-serif" font-weight="bold" font-size="11.2" fill="#0d2b33" stroke="#0d2b33" stroke-width="0.3" text-anchor="middle" letter-spacing="0.2" transform="rotate(-90 708.50 537.00)">D1.112</text>
<text x="634.00" y="823.73" font-family="DejaVu Sans Condensed, DejaVu Sans, Liberation Sans, sans-serif" font-weight="bold" font-size="11.2" fill="#0d2b33" stroke="#0d2b33" stroke-width="0.3" text-anchor="middle" letter-spacing="0.2" transform="rotate(-90 634.00 820.00)">D1.108</text>
<text x="1632.00" y="193.73" font-family="DejaVu Sans Condensed, DejaVu Sans, Liberation Sans, sans-serif" font-weight="bold" font-size="11.2" fill="#0d2b33" stroke="#0d2b33" stroke-width="0.3" text-anchor="middle" letter-spacing="0.2" transform="rotate(-90 1632.00 190.00)">D2.109</text>
<text x="1632.00" y="438.23" font-family="DejaVu Sans Condensed, DejaVu Sans, Liberation Sans, sans-serif" font-weight="bold" font-size="11.2" fill="#0d2b33" stroke="#0d2b33" stroke-width="0.3" text-anchor="middle" letter-spacing="0.2" transform="rotate(-90 1632.00 434.50)">D2.110</text>
<text x="1632.00" y="609.73" font-family="DejaVu Sans Condensed, DejaVu Sans, Liberation Sans, sans-serif" font-weight="bold" font-size="11.2" fill="#0d2b33" stroke="#0d2b33" stroke-width="0.3" text-anchor="middle" letter-spacing="0.2" transform="rotate(-90 1632.00 606.00)">D2.111</text>
<text x="1542.00" y="534.23" font-family="DejaVu Sans Condensed, DejaVu Sans, Liberation Sans, sans-serif" font-weight="bold" font-size="11.2" fill="#0d2b33" stroke="#0d2b33" stroke-width="0.3" text-anchor="middle" letter-spacing="0.2" transform="rotate(-90 1542.00 530.50)">D2.113</text>
<text x="41.00" y="192.73" font-family="DejaVu Sans Condensed, DejaVu Sans, Liberation Sans, sans-serif" font-weight="bold" font-size="11.2" fill="#7c7c7c" stroke="#7c7c7c" stroke-width="0.3" text-anchor="middle" letter-spacing="0.2" transform="rotate(-90 41.00 189.00)">D1.206</text>
<text x="709.50" y="183.73" font-family="DejaVu Sans Condensed, DejaVu Sans, Liberation Sans, sans-serif" font-weight="bold" font-size="11.2" fill="#6c6c6c" stroke="#6c6c6c" stroke-width="0.3" text-anchor="middle" letter-spacing="0.2" transform="rotate(-90 709.50 180.00)">D2.206</text>
<text x="529.00" y="298.73" font-family="DejaVu Sans Condensed, DejaVu Sans, Liberation Sans, sans-serif" font-weight="bold" font-size="11.2" fill="#111" stroke="#111" stroke-width="0.3" text-anchor="middle" letter-spacing="0.2" transform="rotate(-90 529.00 295.00)">D2.011_8</text>
<text x="420.00" y="164.73" font-family="DejaVu Sans Condensed, DejaVu Sans, Liberation Sans, sans-serif" font-weight="bold" font-size="11.2" fill="#111" stroke="#111" stroke-width="0.3" text-anchor="middle" letter-spacing="0.2" transform="rotate(-45 420.00 161.00)">D2.105</text>
<text x="144.00" y="333.73" font-family="DejaVu Sans Condensed, DejaVu Sans, Liberation Sans, sans-serif" font-weight="bold" font-size="11.2" fill="#111" stroke="#111" stroke-width="0.3" text-anchor="middle" letter-spacing="0.2" transform="rotate(-45 144.00 330.00)">D1.012_6</text>
<text x="235.80" y="312.53" font-family="DejaVu Sans Condensed, DejaVu Sans, Liberation Sans, sans-serif" font-weight="bold" font-size="11.2" fill="#111" stroke="#111" stroke-width="0.3" text-anchor="middle" letter-spacing="0.2" transform="rotate(45 235.80 308.80)">D1.012_8</text>
<text x="235.80" y="378.53" font-family="DejaVu Sans Condensed, DejaVu Sans, Liberation Sans, sans-serif" font-weight="bold" font-size="11.2" fill="#111" stroke="#111" stroke-width="0.3" text-anchor="middle" letter-spacing="0.2" transform="rotate(45 235.80 374.80)">D1.012_2</text>
<text x="445.50" y="333.73" font-family="DejaVu Sans Condensed, DejaVu Sans, Liberation Sans, sans-serif" font-weight="bold" font-size="11.2" fill="#111" stroke="#111" stroke-width="0.3" text-anchor="middle" letter-spacing="0.2" transform="rotate(-45 445.50 330.00)">D2.011_6</text>
<text x="453.00" y="378.23" font-family="DejaVu Sans Condensed, DejaVu Sans, Liberation Sans, sans-serif" font-weight="bold" font-size="11.2" fill="#111" stroke="#111" stroke-width="0.3" text-anchor="middle" letter-spacing="0.2" transform="rotate(-45 453.00 374.50)">D2.011_2</text>
<defs><filter id="sh" x="-20%" y="-20%" width="150%" height="160%"><feGaussianBlur stdDeviation="1.3"/></filter></defs>
<text x="16.30" y="27.87" font-family="DejaVu Sans Condensed, DejaVu Sans, Liberation Sans, sans-serif" font-weight="bold" font-size="15" fill="#111" stroke="#111" stroke-width="0.3" text-anchor="start" textLength="170.7" lengthAdjust="spacingAndGlyphs">15-03-2024 18:47:07</text>
<rect x="203.10" y="9.40" width="53.20" height="33.10" rx="5" fill="#6c6c6c" opacity="0.75" filter="url(#sh)"/>
<rect x="201.90" y="7.80" width="51.20" height="31.10" rx="4.00" fill="#cccccc" stroke="#151515" stroke-width="2"/>
<text x="227.50" y="21.87" font-family="DejaVu Sans Condensed, DejaVu Sans, Liberation Sans, sans-serif" font-weight="bold" font-size="12" fill="#111" stroke="#111" stroke-width="0.3" text-anchor="middle" textLength="45.7" lengthAdjust="spacingAndGlyphs">ОБЩИЙ</text>
<text x="227.50" y="34.97" font-family="DejaVu Sans Condensed, DejaVu Sans, Liberation Sans, sans-serif" font-weight="bold" font-size="12" fill="#111" stroke="#111" stroke-width="0.3" text-anchor="middle" textLength="24.1" lengthAdjust="spacingAndGlyphs">ВИД</text>
<rect x="261.20" y="9.40" width="53.20" height="33.10" rx="5" fill="#6c6c6c" opacity="0.75" filter="url(#sh)"/>
<rect x="260.00" y="7.80" width="51.20" height="31.10" rx="4.00" fill="#cccccc" stroke="#151515" stroke-width="2"/>
<text x="285.60" y="21.87" font-family="DejaVu Sans Condensed, DejaVu Sans, Liberation Sans, sans-serif" font-weight="bold" font-size="12" fill="#111" stroke="#111" stroke-width="0.3" text-anchor="middle" textLength="41" lengthAdjust="spacingAndGlyphs">ДЕТАЛ.</text>
<text x="285.60" y="34.97" font-family="DejaVu Sans Condensed, DejaVu Sans, Liberation Sans, sans-serif" font-weight="bold" font-size="12" fill="#111" stroke="#111" stroke-width="0.3" text-anchor="middle" textLength="34.8" lengthAdjust="spacingAndGlyphs">ВИД 1</text>
<rect x="320.50" y="9.40" width="53.20" height="33.10" rx="5" fill="#6c6c6c" opacity="0.75" filter="url(#sh)"/>
<rect x="319.30" y="7.80" width="51.20" height="31.10" rx="4.00" fill="#cccccc" stroke="#151515" stroke-width="2"/>
<text x="344.90" y="21.87" font-family="DejaVu Sans Condensed, DejaVu Sans, Liberation Sans, sans-serif" font-weight="bold" font-size="12" fill="#111" stroke="#111" stroke-width="0.3" text-anchor="middle" textLength="41" lengthAdjust="spacingAndGlyphs">ДЕТАЛ.</text>
<text x="344.90" y="34.97" font-family="DejaVu Sans Condensed, DejaVu Sans, Liberation Sans, sans-serif" font-weight="bold" font-size="12" fill="#111" stroke="#111" stroke-width="0.3" text-anchor="middle" textLength="35" lengthAdjust="spacingAndGlyphs">ВИД 2</text>
<rect x="380.20" y="9.40" width="52.80" height="33.10" rx="5" fill="#6c6c6c" opacity="0.75" filter="url(#sh)"/>
<rect x="379.00" y="7.80" width="50.80" height="31.10" rx="4.00" fill="#cccccc" stroke="#151515" stroke-width="2"/>
<text x="404.40" y="28.27" font-family="DejaVu Sans Condensed, DejaVu Sans, Liberation Sans, sans-serif" font-weight="bold" font-size="12" fill="#111" stroke="#111" stroke-width="0.3" text-anchor="middle" textLength="19.9" lengthAdjust="spacingAndGlyphs">VIP</text>
<rect x="442.20" y="9.40" width="53.20" height="33.10" rx="5" fill="#6c6c6c" opacity="0.75" filter="url(#sh)"/>
<rect x="441.00" y="7.80" width="51.20" height="31.10" rx="4.00" fill="#cccccc" stroke="#151515" stroke-width="2"/>
<text x="466.60" y="21.87" font-family="DejaVu Sans Condensed, DejaVu Sans, Liberation Sans, sans-serif" font-weight="bold" font-size="12" fill="#111" stroke="#111" stroke-width="0.3" text-anchor="middle" textLength="46.5" lengthAdjust="spacingAndGlyphs">ПРИЛЁТ</text>
<text x="466.60" y="34.97" font-family="DejaVu Sans Condensed, DejaVu Sans, Liberation Sans, sans-serif" font-weight="bold" font-size="12" fill="#111" stroke="#111" stroke-width="0.3" text-anchor="middle" textLength="25" lengthAdjust="spacingAndGlyphs">МВЛ</text>
<rect x="504.20" y="9.40" width="53.20" height="33.10" rx="5" fill="#6c6c6c" opacity="0.75" filter="url(#sh)"/>
<rect x="503.00" y="7.80" width="51.20" height="31.10" rx="4.00" fill="#cccccc" stroke="#151515" stroke-width="2"/>
<text x="528.60" y="21.87" font-family="DejaVu Sans Condensed, DejaVu Sans, Liberation Sans, sans-serif" font-weight="bold" font-size="12" fill="#111" stroke="#111" stroke-width="0.3" text-anchor="middle" textLength="46.5" lengthAdjust="spacingAndGlyphs">ПРИЛЁТ</text>
<text x="528.60" y="34.97" font-family="DejaVu Sans Condensed, DejaVu Sans, Liberation Sans, sans-serif" font-weight="bold" font-size="12" fill="#111" stroke="#111" stroke-width="0.3" text-anchor="middle" textLength="23.3" lengthAdjust="spacingAndGlyphs">ВВЛ</text>
<rect x="1184.60" y="9.40" width="83.60" height="33.10" rx="5" fill="#6c6c6c" opacity="0.75" filter="url(#sh)"/>
<rect x="1183.40" y="7.80" width="81.60" height="31.10" rx="4.00" fill="#cccccc" stroke="#151515" stroke-width="2"/>
<text x="1224.20" y="28.27" font-family="DejaVu Sans Condensed, DejaVu Sans, Liberation Sans, sans-serif" font-weight="bold" font-size="12" fill="#111" stroke="#111" stroke-width="0.3" text-anchor="middle" textLength="77.9" lengthAdjust="spacingAndGlyphs">УПРАВЛЕНИЕ</text>
<rect x="1278.40" y="9.40" width="84.10" height="33.10" rx="5" fill="#6c6c6c" opacity="0.75" filter="url(#sh)"/>
<rect x="1277.20" y="7.80" width="82.10" height="31.10" rx="4.00" fill="#cccccc" stroke="#151515" stroke-width="2"/>
<text x="1318.25" y="21.87" font-family="DejaVu Sans Condensed, DejaVu Sans, Liberation Sans, sans-serif" font-weight="bold" font-size="12" fill="#111" stroke="#111" stroke-width="0.3" text-anchor="middle" textLength="79.6" lengthAdjust="spacingAndGlyphs">АКТУАЛЬНЫЕ</text>
<text x="1318.25" y="34.97" font-family="DejaVu Sans Condensed, DejaVu Sans, Liberation Sans, sans-serif" font-weight="bold" font-size="12" fill="#111" stroke="#111" stroke-width="0.3" text-anchor="middle" textLength="76.5" lengthAdjust="spacingAndGlyphs">СООБЩЕНИЯ</text>
<rect x="1372.40" y="9.40" width="84.10" height="33.10" rx="5" fill="#6c6c6c" opacity="0.75" filter="url(#sh)"/>
<rect x="1371.20" y="7.80" width="82.10" height="31.10" rx="4.00" fill="#cccccc" stroke="#151515" stroke-width="2"/>
<text x="1412.25" y="21.87" font-family="DejaVu Sans Condensed, DejaVu Sans, Liberation Sans, sans-serif" font-weight="bold" font-size="12" fill="#111" stroke="#111" stroke-width="0.3" text-anchor="middle" textLength="65.3" lengthAdjust="spacingAndGlyphs">АРХИВНЫЕ</text>
<text x="1412.25" y="34.97" font-family="DejaVu Sans Condensed, DejaVu Sans, Liberation Sans, sans-serif" font-weight="bold" font-size="12" fill="#111" stroke="#111" stroke-width="0.3" text-anchor="middle" textLength="76.5" lengthAdjust="spacingAndGlyphs">СООБЩЕНИЯ</text>
<rect x="1466.40" y="9.40" width="84.10" height="33.10" rx="5" fill="#6c6c6c" opacity="0.75" filter="url(#sh)"/>
<rect x="1465.20" y="7.80" width="82.10" height="31.10" rx="4.00" fill="#cccccc" stroke="#151515" stroke-width="2"/>
<text x="1506.25" y="21.87" font-family="DejaVu Sans Condensed, DejaVu Sans, Liberation Sans, sans-serif" font-weight="bold" font-size="12" fill="#111" stroke="#111" stroke-width="0.3" text-anchor="middle" textLength="55.3" lengthAdjust="spacingAndGlyphs">ПОМОЩЬ</text>
<text x="1506.25" y="34.97" font-family="DejaVu Sans Condensed, DejaVu Sans, Liberation Sans, sans-serif" font-weight="bold" font-size="12" fill="#111" stroke="#111" stroke-width="0.3" text-anchor="middle" textLength="34.8" lengthAdjust="spacingAndGlyphs">ИНФО</text>
<text transform="translate(570.6,40.8) scale(1.6,1)" x="0" y="0" font-family="DejaVu Sans, Liberation Sans, sans-serif" font-weight="bold" font-size="42.6" fill="#3c463c" stroke="#3c463c" stroke-width="1.1" letter-spacing="-1.2">B2</text>
<text x="668.4" y="23.5" font-family="DejaVu Sans, Liberation Sans, sans-serif" font-size="19" fill="#3c463c" stroke="#3c463c" stroke-width="0.7" textLength="54" lengthAdjust="spacingAndGlyphs">SORT</text>
<rect x="669.2" y="27.9" width="53" height="12.8" rx="5" fill="#cacab4" stroke="#e8d53a" stroke-width="2.5"/>
<circle cx="678.6" cy="34.6" r="2.5" fill="#f0de30" stroke="#e0cc48" stroke-width="1.2"/><circle cx="678.6" cy="34.6" r="0.9" fill="#d6c35a"/>
<circle cx="695.5" cy="34.6" r="2.5" fill="#f0de30" stroke="#e0cc48" stroke-width="1.2"/><circle cx="695.5" cy="34.6" r="0.9" fill="#d6c35a"/>
<circle cx="712.4" cy="34.6" r="2.5" fill="#f0de30" stroke="#e0cc48" stroke-width="1.2"/><circle cx="712.4" cy="34.6" r="0.9" fill="#d6c35a"/>
<rect x="726.05" y="8.25" width="318.20" height="26.50" fill="#c5c5c5" stroke="#1a1a1a" stroke-width="1.5" />
<text x="885.00" y="29.03" font-family="DejaVu Sans Condensed, DejaVu Sans, Liberation Sans, sans-serif" font-weight="normal" font-size="19" fill="#505050" text-anchor="middle" textLength="215.3" lengthAdjust="spacingAndGlyphs">Детальный вид 2 вылета</text>
<g fill="none" stroke-linecap="round" stroke-linejoin="round"><path d="M1095.4 19.6 A10.5 8.4 0 1 1 1112.4 19.6 L1103.9 26.4 Z" stroke="#f4f4f4" stroke-width="6.5" opacity="0.85"/><path d="M1090.3 22.3 Q1096.5 17.2 1103.7 14.6 Q1111 17.2 1117.3 22.3" stroke="#eef6ee" stroke-width="5" opacity="0.8"/><path d="M1095.4 19.6 A10.5 8.4 0 1 1 1112.4 19.6 L1103.9 26.4 Z" stroke="#d8121c" stroke-width="3.8"/><path d="M1090.3 22.3 Q1096.5 17.2 1103.7 14.6" stroke="#3da638" stroke-width="2.8"/><path d="M1103.7 14.6 Q1108 16 1111 18.3" stroke="#3da638" stroke-width="2.4"/><path d="M1114 20 L1117.3 22.3" stroke="#3da638" stroke-width="2.8"/></g>
<text transform="translate(1052.2,43) scale(1.3,1)" font-family="DejaVu Sans, Liberation Sans, sans-serif" font-weight="bold" font-size="7.6" fill="#586c6c" textLength="78.6" lengthAdjust="spacing">НОВОКУЗНЕЦК</text>
<rect x="1759.7" y="56.30" width="46" height="113.6" fill="#c3c3c3"/>
<rect x="1759.9" y="56.30" width="2.2" height="113.6" fill="#0c0c0c"/><rect x="1803" y="56.30" width="3" height="113.6" fill="#0c0c0c"/>
<rect x="1759.7" y="55.70" width="46" height="2.1" fill="#0c0c0c"/><rect x="1759.7" y="168.10" width="46" height="1.8" fill="#1a1a1a"/>
<rect x="1761.2" y="65.70" width="41.6" height="38.2" fill="#7cfc00"/>
<text x="1781.60" y="90.58" font-family="DejaVu Sans Condensed, DejaVu Sans, Liberation Sans, sans-serif" font-weight="bold" font-size="13.4" fill="#0a2a0a" stroke="#0a2a0a" stroke-width="0.3" text-anchor="middle" textLength="32.4" lengthAdjust="spacingAndGlyphs">CS01</text>
<rect x="1765.20" y="125.40" width="39.00" height="36.60" rx="6" fill="#6c6c6c" opacity="0.75" filter="url(#sh)"/>
<rect x="1763.85" y="123.65" width="37.30" height="34.90" rx="5.15" fill="#cdcdcd" stroke="#151515" stroke-width="1.7"/>
<text x="1782.60" y="145.77" font-family="DejaVu Sans Condensed, DejaVu Sans, Liberation Sans, sans-serif" font-weight="bold" font-size="12" fill="#111" stroke="#111" stroke-width="0.3" text-anchor="middle" textLength="35.4" lengthAdjust="spacingAndGlyphs">СБРОС</text>
<rect x="1759.7" y="188.30" width="46" height="113.6" fill="#c3c3c3"/>
<rect x="1759.9" y="188.30" width="2.2" height="113.6" fill="#0c0c0c"/><rect x="1803" y="188.30" width="3" height="113.6" fill="#0c0c0c"/>
<rect x="1759.7" y="187.70" width="46" height="2.1" fill="#0c0c0c"/><rect x="1759.7" y="300.10" width="46" height="1.8" fill="#1a1a1a"/>
<rect x="1761.2" y="197.70" width="41.6" height="38.2" fill="#7cfc00"/>
<text x="1781.60" y="222.58" font-family="DejaVu Sans Condensed, DejaVu Sans, Liberation Sans, sans-serif" font-weight="bold" font-size="13.4" fill="#0a2a0a" stroke="#0a2a0a" stroke-width="0.3" text-anchor="middle" textLength="32.4" lengthAdjust="spacingAndGlyphs">CS02</text>
<rect x="1765.20" y="257.20" width="39.00" height="36.60" rx="6" fill="#6c6c6c" opacity="0.75" filter="url(#sh)"/>
<rect x="1763.85" y="255.45" width="37.30" height="34.90" rx="5.15" fill="#cdcdcd" stroke="#151515" stroke-width="1.7"/>
<text x="1782.60" y="277.57" font-family="DejaVu Sans Condensed, DejaVu Sans, Liberation Sans, sans-serif" font-weight="bold" font-size="12" fill="#111" stroke="#111" stroke-width="0.3" text-anchor="middle" textLength="35.4" lengthAdjust="spacingAndGlyphs">СБРОС</text>
<rect x="1759.7" y="320.30" width="46" height="113.6" fill="#c3c3c3"/>
<rect x="1759.9" y="320.30" width="2.2" height="113.6" fill="#0c0c0c"/><rect x="1803" y="320.30" width="3" height="113.6" fill="#0c0c0c"/>
<rect x="1759.7" y="319.70" width="46" height="2.1" fill="#0c0c0c"/><rect x="1759.7" y="432.10" width="46" height="1.8" fill="#1a1a1a"/>
<rect x="1761.2" y="329.70" width="41.6" height="38.2" fill="#7cfc00"/>
<text x="1781.60" y="354.58" font-family="DejaVu Sans Condensed, DejaVu Sans, Liberation Sans, sans-serif" font-weight="bold" font-size="13.4" fill="#0a2a0a" stroke="#0a2a0a" stroke-width="0.3" text-anchor="middle" textLength="32.4" lengthAdjust="spacingAndGlyphs">CS03</text>
<rect x="1765.20" y="389.00" width="39.00" height="36.60" rx="6" fill="#6c6c6c" opacity="0.75" filter="url(#sh)"/>
<rect x="1763.85" y="387.25" width="37.30" height="34.90" rx="5.15" fill="#cdcdcd" stroke="#151515" stroke-width="1.7"/>
<text x="1782.60" y="409.37" font-family="DejaVu Sans Condensed, DejaVu Sans, Liberation Sans, sans-serif" font-weight="bold" font-size="12" fill="#111" stroke="#111" stroke-width="0.3" text-anchor="middle" textLength="35.4" lengthAdjust="spacingAndGlyphs">СБРОС</text>
<rect x="1759.7" y="452.30" width="46" height="113.6" fill="#c3c3c3"/>
<rect x="1759.9" y="452.30" width="2.2" height="113.6" fill="#0c0c0c"/><rect x="1803" y="452.30" width="3" height="113.6" fill="#0c0c0c"/>
<rect x="1759.7" y="451.70" width="46" height="2.1" fill="#0c0c0c"/><rect x="1759.7" y="564.10" width="46" height="1.8" fill="#1a1a1a"/>
<rect x="1761.2" y="461.70" width="41.6" height="38.2" fill="#7cfc00"/>
<text x="1781.60" y="486.58" font-family="DejaVu Sans Condensed, DejaVu Sans, Liberation Sans, sans-serif" font-weight="bold" font-size="13.4" fill="#0a2a0a" stroke="#0a2a0a" stroke-width="0.3" text-anchor="middle" textLength="32.4" lengthAdjust="spacingAndGlyphs">CS04</text>
<rect x="1765.20" y="520.80" width="39.00" height="36.60" rx="6" fill="#6c6c6c" opacity="0.75" filter="url(#sh)"/>
<rect x="1763.85" y="519.05" width="37.30" height="34.90" rx="5.15" fill="#cdcdcd" stroke="#151515" stroke-width="1.7"/>
<text x="1782.60" y="541.17" font-family="DejaVu Sans Condensed, DejaVu Sans, Liberation Sans, sans-serif" font-weight="bold" font-size="12" fill="#111" stroke="#111" stroke-width="0.3" text-anchor="middle" textLength="35.4" lengthAdjust="spacingAndGlyphs">СБРОС</text>
<text x="1782.60" y="811.87" font-family="DejaVu Sans Condensed, DejaVu Sans, Liberation Sans, sans-serif" font-weight="bold" font-size="12" fill="#111" stroke="#111" stroke-width="0.3" text-anchor="middle" textLength="27.2" lengthAdjust="spacingAndGlyphs">v.1.9</text>
<rect x="1764.5" y="829" width="36.2" height="36.4" fill="#c1c1c1" stroke="#9a9a9a" stroke-width="1"/>
<g stroke-linejoin="round"><path d="M1768.3 842 L1776.5 832.4 L1788.8 832.4 L1796.8 842 L1796.8 862.8 L1768.3 862.8 Z" fill="#dfe2df" stroke="#d2d5d2" stroke-width="0.8"/><path d="M1771.5 845 L1778 835 L1787.4 835 L1793.5 845 L1790 851.5 L1775 851.5 Z" fill="#eef0ee"/><path d="M1776 851.8 Q1782.6 850.4 1789.2 851.8 L1788 853.6 Q1782.6 852.6 1777.2 853.6 Z" fill="#7c807c"/><path d="M1768.3 847 L1779.5 855.5 L1785.7 855.5 L1796.8 847 L1796.8 862.8 L1768.3 862.8 Z" fill="#e6e9e6"/><path d="M1768.8 862.3 L1780 855.6 M1796.3 862.3 L1785.2 855.6" stroke="#cfd2cf" stroke-width="0.8" fill="none"/></g>
<rect x="0" y="876.4" width="1808" height="132.2" fill="#f0f0f0"/>
<rect x="0" y="876.4" width="1808" height="1.4" fill="#9e9e9e"/>
<rect x="0" y="877.8" width="1808" height="1.2" fill="#cfcfcf"/>
<rect x="0" y="899.9" width="1800" height="1.1" fill="#8e8e8e"/>
<rect x="18" y="879" width="1.6" height="21" fill="#7c7c7c"/><rect x="19.6" y="879" width="1" height="21" fill="#fbfbfb"/>
<rect x="168.7" y="879" width="1.6" height="21" fill="#7c7c7c"/><rect x="170.29999999999998" y="879" width="1" height="21" fill="#fbfbfb"/>
<rect x="319" y="879" width="1.6" height="21" fill="#7c7c7c"/><rect x="320.6" y="879" width="1" height="21" fill="#fbfbfb"/>
<rect x="370.2" y="879" width="1.6" height="21" fill="#7c7c7c"/><rect x="371.8" y="879" width="1" height="21" fill="#fbfbfb"/>
<rect x="520.4" y="879" width="1.6" height="21" fill="#7c7c7c"/><rect x="522.0" y="879" width="1" height="21" fill="#fbfbfb"/>
<rect x="1655.6" y="879" width="1.6" height="21" fill="#7c7c7c"/><rect x="1657.1999999999998" y="879" width="1" height="21" fill="#fbfbfb"/>
<rect x="0" y="876.4" width="1.2" height="133" fill="#858585"/>
<rect x="1799.8" y="877.5" width="2" height="134.6" fill="#dcdcdc"/>
<rect x="1801.8" y="876.4" width="3.5" height="135.7" fill="#c2c2c2"/>
<rect x="1805.3" y="876.4" width="1.8" height="137.6" fill="#080808"/>
<rect x="1807.1" y="0" width="0.9" height="1017" fill="#c4c4c4"/>
<text x="78.60" y="894.31" font-family="DejaVu Sans Condensed, DejaVu Sans, Liberation Sans, sans-serif" font-weight="bold" font-size="11" fill="#111" stroke="#111" stroke-width="0.3" text-anchor="start" textLength="12.6" lengthAdjust="spacingAndGlyphs">№</text>
<path d="M96.8 885.7 H106.0 L102.39999999999999 890.3000000000001 V894.3000000000001 L100.39999999999999 892.9000000000001 V890.3000000000001 Z" fill="#e8e8e8" stroke="#1a1a1a" stroke-width="1.1" stroke-linejoin="round"/>
<polygon points="212.4,887.2 220.6,887.2 216.5,891.8000000000001" fill="#111"/>
<text x="226.70" y="894.31" font-family="DejaVu Sans Condensed, DejaVu Sans, Liberation Sans, sans-serif" font-weight="bold" font-size="11" fill="#111" stroke="#111" stroke-width="0.3" text-anchor="start" textLength="36.5" lengthAdjust="spacingAndGlyphs">Время</text>
<path d="M267.6 885.7 H276.8 L273.20000000000005 890.3000000000001 V894.3000000000001 L271.20000000000005 892.9000000000001 V890.3000000000001 Z" fill="#e8e8e8" stroke="#1a1a1a" stroke-width="1.1" stroke-linejoin="round"/>
<text x="322.60" y="894.31" font-family="DejaVu Sans Condensed, DejaVu Sans, Liberation Sans, sans-serif" font-weight="bold" font-size="11" fill="#111" stroke="#111" stroke-width="0.3" text-anchor="start" textLength="27" lengthAdjust="spacingAndGlyphs">Квит</text>
<path d="M355.4 885.7 H364.59999999999997 L361.0 890.3000000000001 V894.3000000000001 L359.0 892.9000000000001 V890.3000000000001 Z" fill="#e8e8e8" stroke="#1a1a1a" stroke-width="1.1" stroke-linejoin="round"/>
<polygon points="407,887.2 415.2,887.2 411.1,891.8000000000001" fill="#111"/>
<text x="420.80" y="894.31" font-family="DejaVu Sans Condensed, DejaVu Sans, Liberation Sans, sans-serif" font-weight="bold" font-size="11" fill="#111" stroke="#111" stroke-width="0.3" text-anchor="start" textLength="50.5" lengthAdjust="spacingAndGlyphs">Событие</text>
<path d="M476.6 885.7 H485.8 L482.20000000000005 890.3000000000001 V894.3000000000001 L480.20000000000005 892.9000000000001 V890.3000000000001 Z" fill="#e8e8e8" stroke="#1a1a1a" stroke-width="1.1" stroke-linejoin="round"/>
<text x="1089.00" y="894.31" font-family="DejaVu Sans Condensed, DejaVu Sans, Liberation Sans, sans-serif" font-weight="bold" font-size="11" fill="#111" stroke="#111" stroke-width="0.3" text-anchor="middle">Сообщение</text>
<text x="1717.50" y="894.31" font-family="DejaVu Sans Condensed, DejaVu Sans, Liberation Sans, sans-serif" font-weight="bold" font-size="11" fill="#111" stroke="#111" stroke-width="0.3" text-anchor="start" textLength="28.2" lengthAdjust="spacingAndGlyphs">Зона</text>
<rect x="1.2" y="993" width="1798.8" height="15.4" fill="#f1f1f1"/><rect x="1.2" y="993.2" width="1798.8" height="0.9" fill="#fafafa"/><rect x="1.2" y="1006.9" width="1798.8" height="1.3" fill="#fafafa"/>
<rect x="16" y="994.2" width="1758" height="12.6" fill="#c1c1c1"/>
<polygon points="9.6,997.2 9.6,1004 5.8,1000.6" fill="#8c8c8c"/>
<polygon points="1789.8,996.4 1789.8,1004.4 1794,1000.4" fill="#222"/>
<rect x="0" y="1008.4" width="1805.3" height="1.2" fill="#e6e6e6"/>
<rect x="0" y="1009.6" width="1805.3" height="1.2" fill="#cfcfcf"/>
<rect x="0" y="1010.8" width="1805.3" height="1.3" fill="#bdbdbd"/>
<rect x="0" y="1012.1" width="1807.1" height="1.9" fill="#050505"/>
<rect x="0" y="1014" width="1808" height="2" fill="#c4c4c4"/>
<rect x="0" y="1016" width="1808" height="1" fill="#8a8a8a"/>
<rect x="0" y="876.4" width="1.1" height="140.6" fill="#6a6a6a"/>
</svg>
</body></html>
